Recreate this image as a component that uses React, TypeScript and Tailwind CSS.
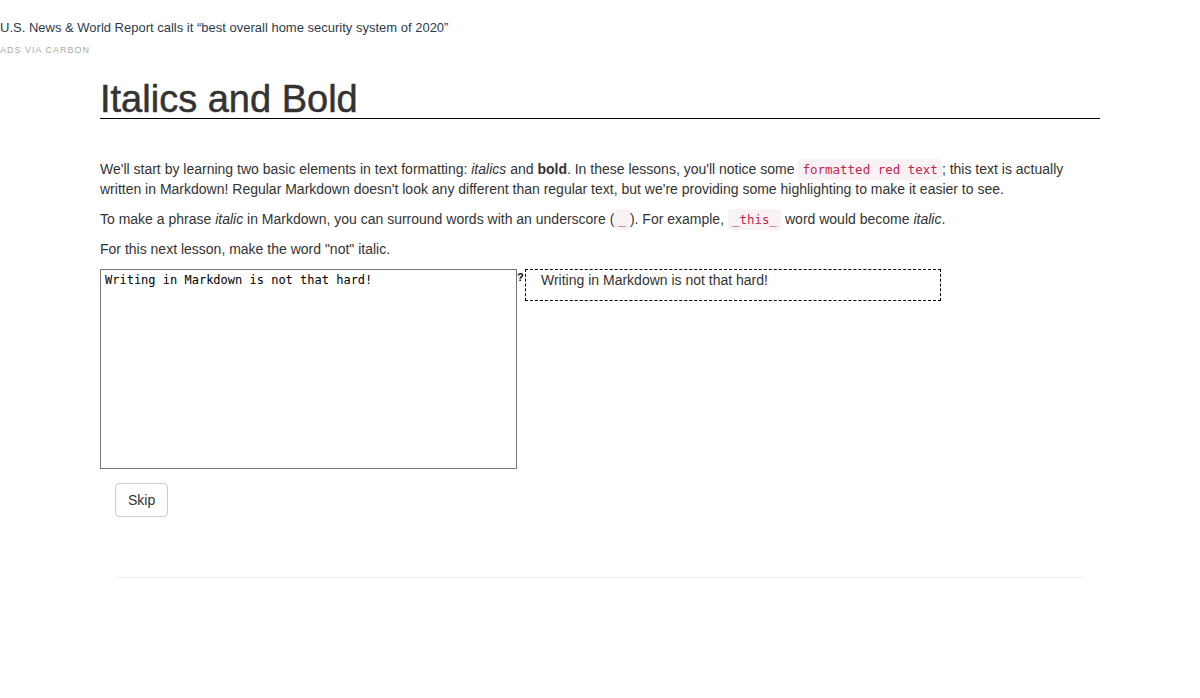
import React from "react";

const codeCls =
  "font-['DejaVu_Sans_Mono',monospace] text-[12.5px] leading-none text-[#c7254e] bg-[#f9f2f4] rounded-[4px] px-[4px] py-[3px]";

export default function App() {
  return (
    <div className="min-h-[698px] bg-white font-['Liberation_Sans',Arial,sans-serif] text-[#333] text-[14px] leading-[20px]">
      <div className="pt-[19px]">
        <div className="text-[13px] leading-[18px] text-[#2d3b4e]">
          U.S. News &amp; World Report calls it “best overall home security system of 2020”
        </div>
        <div className="mt-[7px] text-[9px] leading-[12px] tracking-[1px] uppercase text-[#aaa]">
          ads via Carbon
        </div>
      </div>

      <div className="mx-auto w-[1000px]">
        <h1 className="mt-[24px] text-[38px] leading-[38px] font-normal [-webkit-text-stroke:0.5px_#333] text-[#333] border-b border-black">
          Italics and Bold
        </h1>

        <div className="mt-[40px]">
          <p>
            We'll start by learning two basic elements in text formatting: <em>italics</em> and{" "}
            <strong>bold</strong>. In these lessons, you'll notice some{" "}
            <code className={codeCls}>formatted red text</code>; this text is actually written in
            Markdown! Regular Markdown doesn't look any different than regular text, but we're
            providing some highlighting to make it easier to see.
          </p>
          <p className="mt-[10px]">
            To make a phrase <em>italic</em> in Markdown, you can surround words with an underscore (
            <code className={codeCls}>_</code>). For example,{" "}
            <code className={codeCls}>_this_</code> word would become <em>italic</em>.
          </p>
          <p className="mt-[10px]">For this next lesson, make the word "not" italic.</p>
        </div>

        <div className="mt-[10px] flex items-start">
          <textarea
            className="w-[417px] h-[200px] border border-[#767676] px-[4px] pt-[3px] font-['DejaVu_Sans_Mono',monospace] text-[12px] leading-[15px] text-black resize-none outline-none"
            defaultValue="Writing in Markdown is not that hard!"
          />
          <span className="w-[8px] text-[11px] leading-[16px] font-bold text-black">?</span>
          <div className="w-[416px] border border-dashed border-black px-[15px]">
            <p className="mb-[10px]">Writing in Markdown is not that hard!</p>
          </div>
        </div>

        <div className="px-[15px]">
          <button className="mt-[14px] border border-[#ccc] rounded-[4px] px-[12px] py-[6px] text-[14px] leading-[20px] text-[#333] bg-white">
            Skip
          </button>
          <hr className="mt-[60px] border-0 border-t border-[#eee]" />
        </div>
      </div>
    </div>
  );
}
